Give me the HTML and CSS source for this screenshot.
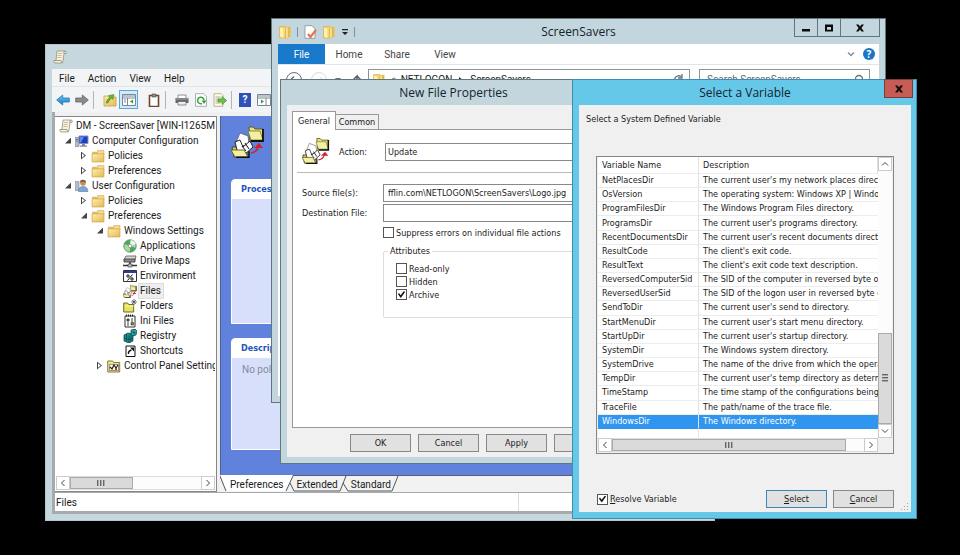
FILE: index.html
```
<!DOCTYPE html>
<html lang="en">
<head>
<meta charset="utf-8">
<title>Group Policy Management Editor</title>
<link rel="stylesheet" href="styles.css">
</head>
<body>
<svg class="defs" aria-hidden="true">
  <defs>
    <linearGradient id="gold" x1="0" y1="0" x2="1" y2="1"><stop offset="0" stop-color="#fdeeb4"/><stop offset="1" stop-color="#e5b950"/></linearGradient>
    <linearGradient id="sky" x1="0" y1="0" x2="0" y2="1"><stop offset="0" stop-color="#6cc8f5"/><stop offset="1" stop-color="#1777c4"/></linearGradient>
  </defs>
  <symbol id="folder" viewBox="0 0 13 13"><path d="M1 2.500h4l1 1.200h6V12H1z" fill="#e3b95b"/><path d="M6 1.500h6v4H6z" fill="#f6dc92" stroke="#d5a849" stroke-width=".6"/><path d="M1 4.500h11V12H1z" fill="url(#gold)" stroke="#d3a74a" stroke-width=".7"/></symbol>
  <symbol id="book" viewBox="0 0 12 13"><path d="M1 1.500h6l1 1v9.500H1z" fill="#f4d673" stroke="#d9aa3c" stroke-width=".6"/><path d="M6 3l5-1.500V11l-5 1.500z" fill="#e9ba42"/><path d="M1.500 2.500l3 1V12l-3-1z" fill="#fff1b5"/><path d="M7 3l1.500-.5v9L7 12z" fill="#fae7a0"/></symbol>
  <symbol id="scroll" viewBox="0 0 14 14"><path d="M4 1h8q2 0 1 2.500h-2L10 11q0 2-2 2H2q-1.500 0-1-2.500h2z" fill="#f6f2df" stroke="#97917c" stroke-width=".8"/><path d="M1.500 10.500H8q0 2 1.500 2.300M11 3.500q-1-2 1-2.400" fill="none" stroke="#8f8871" stroke-width=".8"/><path d="M5 3.500h4M4.700 5.500h4M4.400 7.500h4" stroke="#b9b18e" stroke-width=".8"/></symbol>
  <symbol id="computer" viewBox="0 0 14 13"><path d="M0 3h4v9H0z" fill="#b4bdcc" stroke="#7c8798" stroke-width=".7"/><path d="M1 5h2M1 6.500h2" stroke="#45536b" stroke-width=".6"/><path d="M4 1.500h9v7.500H4z" fill="#1e3fc4" stroke="#8793ad" stroke-width="1"/><path d="M5 2.500h4L6 8H5z" fill="#5b8cf0"/><path d="M7 9h3v2h2v1.200H5V11h2z" fill="#7e899c"/></symbol>
  <symbol id="user" viewBox="0 0 14 13"><path d="M0 2h4v9H0z" fill="#b4bdcc" stroke="#7c8798" stroke-width=".6"/><circle cx="8" cy="3.500" r="2.800" fill="#c68e5a"/><path d="M5 3q0-3 3-2.800T11 3q-3-1.500-6 0" fill="#7c5a35"/><path d="M3.500 12q0-5 4.500-5t5 5z" fill="#7fa6d6" stroke="#5579a9" stroke-width=".6"/></symbol>
  <symbol id="files" viewBox="0 0 34 34"><path d="M18 3h4l2 2h8v11H19z" fill="#e8e27c" stroke="#5d5b1e" stroke-width="1"/><path d="M17 7h12l3 9H20z" fill="#f4f0a2" stroke="#77742b" stroke-width=".8"/><path d="M32 5v12H20" fill="none" stroke="#111" stroke-width="1.800"/><path d="M1 23h5l2 2h8v8H3z" fill="#d8d25d" stroke="#4a481c"/><path d="M9 9l8 3 1 8-11 3-1-7z" fill="#fff" stroke="#555" stroke-width=".7"/><path d="M4 18l5-2 3 7 7-6 3 6-9 8-6-1z" fill="#fff" stroke="#111" stroke-width=".9"/><path d="M14 19l4 6M11 22l4 5" stroke="#111" stroke-width="1"/><path d="M0 26h13l4 7H4z" fill="#f4f0a2" stroke="#5d5b1e" stroke-width=".9"/><path d="M5 33.300h13v-6" fill="none" stroke="#111" stroke-width="1.500"/><path d="M20 29q6-1 7-6" fill="none" stroke="#d3222c" stroke-width="1.500"/><path d="M23 24l5-5 4 5h-3z" fill="#d3222c"/></symbol>
  <symbol id="disc" viewBox="0 0 14 14"><circle cx="7" cy="7" r="6.200" fill="#a8dba9" stroke="#55775a" stroke-width=".8"/><path d="M7 7L1 5q2-4 6-4.200zM7 7l6 2q-2 4-6 4.200z" fill="#4aa95b"/><path d="M7 7l1-6q4 1 5 4z" fill="#ecf6ef"/><circle cx="7" cy="7" r="1.800" fill="#fff" stroke="#6f8a73" stroke-width=".7"/></symbol>
  <symbol id="drive" viewBox="0 0 14 14"><path d="M3 2h10l-1 4H1z" fill="#d8d8d8" stroke="#555" stroke-width=".8"/><path d="M1 5h11v3H1z" fill="#8b8b8b" stroke="#333" stroke-width=".8"/><path d="M0 11.500h14M7 8v4" stroke="#333" stroke-width="1.500"/><path d="M5 10h4v3H5z" fill="#bcbcbc" stroke="#333" stroke-width=".6"/></symbol>
  <symbol id="env" viewBox="0 0 14 14"><path d="M.5 1.500h13v11H.5z" fill="#fff" stroke="#333"/><path d="M1 2h12v2H1z" fill="#263da5"/><circle cx="5" cy="7" r="1.200" fill="none" stroke="#111"/><circle cx="9" cy="10" r="1.200" fill="none" stroke="#111"/><path d="M9.500 5.500l-5 6" stroke="#111"/></symbol>
  <symbol id="newfolder" viewBox="0 0 14 14"><path d="M.7 4h4l1 1.500h5V13H.7z" fill="#e6e35c" stroke="#5f5f20" stroke-width=".9"/><path d="M2 7h8.500" stroke="#fbf9b4"/><path d="M11 0v6M8 3h6M9 1l4 4M13 1L9 5" stroke="#444" stroke-width=".7"/></symbol>
  <symbol id="ini" viewBox="0 0 14 14"><path d="M2 2h10v11H2z" fill="#fff" stroke="#333"/><path d="M3.500.5v2M5.500.5v2M7.500.5v2M9.500.5v2" stroke="#222"/><path d="M4 5h2v2H4zM8 5h2M8 7h2M4 9h2M4 11h2" fill="#486d2d" stroke="#444"/><path d="M8 8.500h2.500V11H8z" fill="#72912b" stroke="#333" stroke-width=".6"/></symbol>
  <symbol id="reg" viewBox="0 0 14 14"><path d="M1 6l4-2 5 1v7l-4 2-5-2z" fill="#168d91" stroke="#0b3638" stroke-width=".7"/><path d="M1 9l5 1.500L10 9M3.500 5v7M6 6.500V14M8 5v7" fill="none" stroke="#0b3638" stroke-width=".6"/><path d="M8 1l4-1 2 2-1 4-3 1-2-2z" fill="#29b6b5" stroke="#0b3638" stroke-width=".7"/><path d="M8 3l5 1M11 0v6" stroke="#0b3638" stroke-width=".6"/></symbol>
  <symbol id="shortcut" viewBox="0 0 14 14"><path d="M3 2h9v10.500H3z" fill="#fff" stroke="#111"/><path d="M5.500 10q-.5-3 3-4" fill="none" stroke="#111" stroke-width="1.400"/><path d="M7 3.500h4v4z" fill="#111"/></symbol>
  <symbol id="cpl" viewBox="0 0 14 14"><path d="M.7 2h5l1 1.500h6V13H.7z" fill="#efe58b" stroke="#77702a" stroke-width=".9"/><path d="M2.500 5.500h9v6h-9z" fill="#fff" stroke="#555" stroke-width=".6"/><path d="M3 8l2 2 2-4 2 3 2-3" fill="none" stroke="#222" stroke-width="1.200"/><path d="M8 9h2v2H8z" fill="#c33"/></symbol>
  <symbol id="left" viewBox="0 0 8 8"><path d="M5.500 1l-3 3 3 3" fill="none" stroke="#444"/></symbol>
  <symbol id="right" viewBox="0 0 8 8"><path d="M2.500 1l3 3-3 3" fill="none" stroke="#444"/></symbol>
  <symbol id="up" viewBox="0 0 8 8"><path d="M1 5.500l3-3 3 3" fill="none" stroke="#444"/></symbol>
  <symbol id="down" viewBox="0 0 8 8"><path d="M1 2.500l3 3 3-3" fill="none" stroke="#444"/></symbol>
</svg>

<main class="desktop">

<section class="window console" aria-label="Group Policy console">
  <header class="titlebar"><svg class="i14"><use href="#scroll"/></svg></header>
  <nav class="menubar"><button>File</button><button>Action</button><button>View</button><button>Help</button></nav>
  <div class="toolbar">
    <button aria-label="Back"><svg class="i14" viewBox="0 0 14 14"><path d="M.7 7l6-5v3h6.600v4H6.700v3z" fill="url(#sky)" stroke="#2b77b5" stroke-width=".8"/></svg></button>
    <button aria-label="Forward"><svg class="i14" viewBox="0 0 14 14"><path d="M13.300 7l-6-5v3H.7v4h6.600v3z" fill="#8b8b8b" stroke="#646464" stroke-width=".8"/></svg></button>
    <i class="sep"></i>
    <button aria-label="Up one level" class="lead"><svg class="i14" viewBox="0 0 14 14"><path d="M1 3h4l1 1h7v9H1z" fill="url(#gold)" stroke="#c99f44" stroke-width=".8"/><path d="M3 10q1-4 4-6L5.500 2.500 11 1.500 10 6.500 8.700 5.300Q6 7 5 10z" fill="#68b42e" stroke="#3c8519" stroke-width=".5"/></svg></button>
    <button aria-label="Show console tree" class="on"><svg class="i14" viewBox="0 0 14 14"><path d="M.5 1.500h13v11H.5z" fill="#fff" stroke="#7b8794"/><path d="M1 3h12M1 5h12" stroke="#7b8794"/><path d="M5.500 5v7" stroke="#7b8794"/><path d="M2 7h2M2 9h2" stroke="#6a8fc4"/><path d="M11 6.500v4L8 8.500z" fill="#3b9a38"/></svg></button>
    <button aria-label="Properties" class="lead"><svg class="i14" viewBox="0 0 14 14"><path d="M2.500 2.500h9v11h-9z" fill="#fff" stroke="#74462b" stroke-width="1.600"/><path d="M5 1h4v3H5z" fill="#87898c" stroke="#444" stroke-width=".6"/></svg></button>
    <i class="sep"></i>
    <button aria-label="Print" class="lead"><svg class="i14" viewBox="0 0 14 14"><path d="M3 2h8v4H3z" fill="#fff" stroke="#777" stroke-width=".8"/><path d="M.5 5h13v5H.5z" fill="#63666b"/><path d="M1 6h12" stroke="#a9adb2"/><path d="M3 8.500h8V12H3z" fill="#e8f0f4" stroke="#666" stroke-width=".7"/></svg></button>
    <button aria-label="Refresh"><svg class="i14" viewBox="0 0 14 14"><path d="M1.500.7h8l3 3v9.600h-11z" fill="#fff" stroke="#9a9a9a" stroke-width=".8"/><path d="M10 7.500a3.200 3.200 0 1 0-2 3" fill="none" stroke="#38a43a" stroke-width="1.500"/><path d="M7.500 7.500h5L10 11z" fill="#38a43a"/></svg></button>
    <button aria-label="Export list"><svg class="i14" viewBox="0 0 14 14"><path d="M1 .7h7l2 2v10.600H1z" fill="#fffbe0" stroke="#aaa489" stroke-width=".8"/><path d="M2.500 4h5M2.500 6h5M2.500 8h5M2.500 10h5" stroke="#999" stroke-width=".8"/><path d="M5 6h4V3.500l4.700 4L9 11.500V9H5z" fill="#66c34b" stroke="#328925" stroke-width=".6"/></svg></button>
    <i class="sep"></i>
    <button aria-label="Help" class="helpbtn">?</button>
    <button aria-label="Show action pane"><svg class="i14" viewBox="0 0 14 14"><path d="M.5 1.500h13v11H.5z" fill="#fff" stroke="#7b8794"/><path d="M1 3h12M1 5h12M9 5v7" stroke="#7b8794"/><path d="M4 6.500v4l3-2z" fill="#3b9a38"/></svg></button>
  </div>
  <div class="workspace">
    <aside class="treepane">
      <ul class="tree">
        <li class="root"><svg class="i14"><use href="#scroll"/></svg><span>DM - ScreenSaver [WIN-I1265M</span></li>
        <li class="l1 open"><svg class="i14"><use href="#computer"/></svg><span>Computer Configuration</span></li>
        <li class="l2 shut"><svg class="i14"><use href="#folder"/></svg><span>Policies</span></li>
        <li class="l2 shut"><svg class="i14"><use href="#folder"/></svg><span>Preferences</span></li>
        <li class="l1 open"><svg class="i14"><use href="#user"/></svg><span>User Configuration</span></li>
        <li class="l2 shut"><svg class="i14"><use href="#folder"/></svg><span>Policies</span></li>
        <li class="l2 open"><svg class="i14"><use href="#folder"/></svg><span>Preferences</span></li>
        <li class="l3 open"><svg class="i14"><use href="#folder"/></svg><span>Windows Settings</span></li>
        <li class="l4"><svg class="i14"><use href="#disc"/></svg><span>Applications</span></li>
        <li class="l4"><svg class="i14"><use href="#drive"/></svg><span>Drive Maps</span></li>
        <li class="l4"><svg class="i14"><use href="#env"/></svg><span>Environment</span></li>
        <li class="l4 picked"><svg class="i14"><use href="#files"/></svg><span>Files</span></li>
        <li class="l4"><svg class="i14"><use href="#newfolder"/></svg><span>Folders</span></li>
        <li class="l4"><svg class="i14"><use href="#ini"/></svg><span>Ini Files</span></li>
        <li class="l4"><svg class="i14"><use href="#reg"/></svg><span>Registry</span></li>
        <li class="l4"><svg class="i14"><use href="#shortcut"/></svg><span>Shortcuts</span></li>
        <li class="l3 shut"><svg class="i14"><use href="#cpl"/></svg><span>Control Panel Settings</span></li>
      </ul>
      <div class="hscroll">
        <button aria-label="Scroll left"><svg><use href="#left"/></svg></button>
        <div class="track"><div class="thumb short"><i></i><i></i><i></i></div></div>
        <button aria-label="Scroll right"><svg><use href="#right"/></svg></button>
      </div>
    </aside>
    <div class="details">
      <div class="canvas">
        <div class="banner"><svg><use href="#files"/></svg></div>
        <section class="card grow"><h2>Processing</h2><p></p></section>
        <section class="card"><h2>Description</h2><p>No policies selected</p></section>
      </div>
      <div class="viewtabs">
        <svg class="edges" viewBox="0 0 180 17" aria-hidden="true"><path d="M0 0h73l-7 16H6z" fill="#fff"/><path d="M0 1l6 15M66 16l7-15M70 8l4 8h46l6-15M123 8l5 8h44l6-15" fill="none" stroke="#555"/></svg>
        <button>Preferences</button><button>Extended</button><button>Standard</button>
      </div>
    </div>
  </div>
  <footer class="status"><span>Files</span><span></span></footer>
</section>

<section class="window explorer" aria-label="ScreenSavers">
  <header class="titlebar">
    <div class="quick">
      <svg class="i14"><use href="#book"/></svg><i class="tick"></i>
      <svg class="i14" viewBox="0 0 14 14"><path d="M2 .7h7l3 3v9.600H2z" fill="#fff" stroke="#858a90" stroke-width=".8"/><path d="M5 9l2.500 3 5.500-7" fill="none" stroke="#e4754c" stroke-width="2.200"/></svg>
      <svg class="i14"><use href="#book"/></svg>
      <svg class="i8" viewBox="0 0 8 8"><path d="M1 1h6v1.200H1zM1 4h6L4 7z" fill="#222"/></svg><i class="tick"></i>
    </div>
    <h1>ScreenSavers</h1>
    <div class="winbtns">
      <button aria-label="Minimize"><svg viewBox="0 0 10 10"><path d="M1 6h8v2.500H1z"/></svg></button>
      <button aria-label="Maximize"><svg viewBox="0 0 10 10"><path d="M1 1.500h8v7H1zM3 4v2.800h4V4z" fill-rule="evenodd"/></svg></button>
      <button aria-label="Close" class="wide"><svg viewBox="0 0 10 10"><path d="M1 1.500h2.500L5 3.600l1.500-2.100H9L6.400 5 9 8.500H6.500L5 6.400 3.500 8.500H1L3.600 5z"/></svg></button>
    </div>
  </header>
  <div class="ribbon">
    <button class="file">File</button><button>Home</button><button>Share</button><button>View</button>
    <div class="ribbonend"><svg class="i8" viewBox="0 0 8 8"><path d="M1 2.500l3 3 3-3" fill="none" stroke="#84909a" stroke-width="1.500"/></svg><button class="round" aria-label="Help">?</button></div>
  </div>
  <div class="navrow">
    <svg class="navicons" viewBox="0 0 82 18" aria-hidden="true"><circle cx="8" cy="9" r="7.500" fill="#fff" stroke="#667079"/><path d="M12 9H4.500L8 5.500M4.500 9L8 12.500" fill="none" stroke="#667079" stroke-width="1.500"/><circle cx="33" cy="9" r="7.500" fill="#fff" stroke="#d7dade"/><path d="M29 9h8l-3-3" fill="none" stroke="#d7dade"/><path d="M49 7h6l-3 4z" fill="#667079"/><path d="M71 15V5l-3.500 3.500M71 5l3.500 3.500" fill="none" stroke="#556069" stroke-width="1.500"/></svg>
    <div class="address"><svg class="i14"><use href="#book"/></svg><span>«</span><a href="#netlogon">NETLOGON</a><svg class="i8" viewBox="0 0 8 8"><path d="M2 1l4 3-4 3z" fill="#222"/></svg><a href="#savers">ScreenSavers</a><svg class="i14 reload" viewBox="0 0 14 14"><path d="M11 9a4 4 0 1 1-1-5.500M11 1v4H7" fill="none" stroke="#667079" stroke-width="1.300"/></svg></div>
    <div class="search"><input type="text" aria-label="Search" placeholder="Search ScreenSavers"><svg class="i14" viewBox="0 0 14 14"><circle cx="8" cy="6" r="3.500" fill="none" stroke="#667079" stroke-width="1.300"/><path d="M5.500 8.500L2 12" stroke="#667079" stroke-width="1.500"/></svg></div>
  </div>
</section>

<section class="window props" role="dialog" aria-label="New File Properties">
  <header class="titlebar"><h1>New File Properties</h1></header>
  <div class="body">
    <div class="tabs"><button class="active">General</button><button>Common</button></div>
    <div class="page">
      <div class="action"><svg><use href="#files"/></svg><label for="act">Action:</label><select id="act"><option>Update</option></select></div>
      <div class="fields">
        <label for="src">Source file(s):</label><input id="src" type="text" value="fflin.com\NETLOGON\ScreenSavers\Logo.jpg">
        <label for="dst">Destination File:</label><input id="dst" type="text">
        <div class="options">
          <label class="check"><input type="checkbox">Suppress errors on individual file actions</label>
          <fieldset><legend>Attributes</legend>
            <label class="check"><input type="checkbox">Read-only</label>
            <label class="check"><input type="checkbox">Hidden</label>
            <label class="check"><input type="checkbox" checked>Archive</label>
          </fieldset>
        </div>
      </div>
    </div>
    <div class="actions"><button>OK</button><button>Cancel</button><button>Apply</button><button>Help</button></div>
  </div>
</section>

<section class="window picker" role="dialog" aria-label="Select a Variable">
  <header class="titlebar"><h1>Select a Variable</h1>
    <button class="close" aria-label="Close"><svg viewBox="0 0 10 10"><path d="M1 1.500h2.500L5 3.600l1.500-2.100H9L6.400 5 9 8.500H6.500L5 6.400 3.500 8.500H1L3.600 5z"/></svg></button></header>
  <div class="body">
    <p>Select a System Defined Variable</p>
    <div class="listbox">
      <div class="rows">
        <table>
          <thead><tr><th>Variable Name</th><th>Description</th></tr></thead>
          <tbody>
            <tr><td>NetPlacesDir</td><td>The current user's my network places direct</td></tr>
            <tr><td>OsVersion</td><td>The operating system: Windows XP | Windo</td></tr>
            <tr><td>ProgramFilesDir</td><td>The Windows Program Files directory.</td></tr>
            <tr><td>ProgramsDir</td><td>The current user's programs directory.</td></tr>
            <tr><td>RecentDocumentsDir</td><td>The current user's recent documents directo</td></tr>
            <tr><td>ResultCode</td><td>The client's exit code.</td></tr>
            <tr><td>ResultText</td><td>The client's exit code text description.</td></tr>
            <tr><td>ReversedComputerSid</td><td>The SID of the computer in reversed byte o</td></tr>
            <tr><td>ReversedUserSid</td><td>The SID of the logon user in reversed byte o</td></tr>
            <tr><td>SendToDir</td><td>The current user's send to directory.</td></tr>
            <tr><td>StartMenuDir</td><td>The current user's start menu directory.</td></tr>
            <tr><td>StartUpDir</td><td>The current user's startup directory.</td></tr>
            <tr><td>SystemDir</td><td>The Windows system directory.</td></tr>
            <tr><td>SystemDrive</td><td>The name of the drive from which the opera</td></tr>
            <tr><td>TempDir</td><td>The current user's temp directory as determ</td></tr>
            <tr><td>TimeStamp</td><td>The time stamp of the configurations being e</td></tr>
            <tr><td>TraceFile</td><td>The path/name of the trace file.</td></tr>
            <tr class="selected"><td>WindowsDir</td><td>The Windows directory.</td></tr>
          </tbody>
        </table>
      </div>
      <div class="vscroll">
        <button aria-label="Scroll up"><svg><use href="#up"/></svg></button>
        <div class="track"><div class="thumb"><i></i><i></i><i></i></div></div>
        <button aria-label="Scroll down"><svg><use href="#down"/></svg></button>
      </div>
      <div class="hscroll">
        <button aria-label="Scroll left"><svg><use href="#left"/></svg></button>
        <div class="track"><div class="thumb long"><i></i><i></i><i></i></div></div>
        <button aria-label="Scroll right"><svg><use href="#right"/></svg></button>
      </div>
    </div>
    <div class="confirm">
      <label class="check"><input type="checkbox" checked><span><u>R</u>esolve Variable</span></label>
      <button class="default"><u>S</u>elect</button><button><u>C</u>ancel</button>
    </div>
    <svg class="grip" viewBox="0 0 8 8" aria-hidden="true"><path d="M6 0h1v1H6zM3 3h1v1H3zM6 3h1v1H6zM0 6h1v1H0zM3 6h1v1H3zM6 6h1v1H6z" fill="#a5a5a5"/></svg>
  </div>
</section>

</main>
</body>
</html>
```
FILE: styles.css
```
:root {
  --ui: Roboto, "Open Sans", sans-serif;
  --dialog: "DejaVu Sans Condensed", "DejaVu Sans", sans-serif;
  --title: "Open Sans", "Noto Sans", sans-serif;
  --frame: #c3d6de;
  --edge: #5f7880;
}
* { box-sizing: border-box; }
body { margin: 0; background: #000; color: #1b1b1b; font: 10px/15px var(--ui); }
button, input, select { margin: 0; padding: 0; border: 0; border-radius: 0; background: none; color: inherit; font: inherit; }
h1, h2, p, ul { margin: 0; padding: 0; font-weight: normal; }
a { color: inherit; text-decoration: none; }
svg { display: block; flex: none; }
.defs { position: absolute; width: 0; height: 0; }
.i14 { width: 14px; height: 14px; }
.i8 { width: 8px; height: 8px; }

.desktop { position: relative; height: 100vh; min-height: 540px; overflow: hidden; }
.window { position: absolute; display: flex; flex-direction: column; background: var(--frame); border: 1px solid var(--edge); }
.titlebar { display: flex; align-items: center; flex: none; height: 25px; }
.titlebar h1 { flex: 1; text-align: center; font: 12px/24px var(--title); color: #14232b; }

/* Console */
.console { inset: 44px 245px 34px 45px; padding: 0 6px 6px; background: #c7d7de; border-color: #b5c5cc; }
.console .titlebar { height: 24px; padding-left: 1px; }
.menubar { display: flex; height: 17px; background: #f3f4f5; padding: 1px 7px 0; gap: 13px; flex: none; }
.toolbar { display: flex; align-items: center; height: 26px; padding-left: 1px; background: #f3f4f5; border-top: 1px solid #e2e4e6; flex: none; }
.toolbar button { display: grid; place-items: center; width: 19px; height: 19px; flex: none; }
.toolbar .sep { width: 1px; height: 18px; margin: 0 2px; background: #b0b4b8; }
.toolbar .lead { margin-left: 4px; }
.toolbar .on { border: 1px solid #58a9dc; background: #d3e9f7; margin-right: 2px; }
.toolbar .helpbtn { width: 12px; height: 14px; margin: 0 3px 0 5px; background: #2f52b8; color: #fff; font-weight: bold; line-height: 14px; }
.workspace { display: flex; flex: 1; min-height: 0; padding-top: 4px; background: #f0f0f0; border-left: 3px solid #a5abae; }
.treepane { display: flex; flex-direction: column; width: 162px; margin-right: 3px; flex: none; background: #fff; border: 1px solid #82888d; border-left: 0; padding: 1px; }
.tree { flex: 1; min-height: 0; list-style: none; overflow: hidden; }
.tree li { display: flex; align-items: center; gap: 3px; height: 15px; white-space: nowrap; }
.tree .root { padding-left: 3px; }
.l1 { padding-left: 6px; }
.l2 { padding-left: 22px; }
.l3 { padding-left: 38px; }
.l4 { padding-left: 67px; }
.open::before, .shut::before { content: ""; width: 10px; height: 6px; flex: none; background: #444; clip-path: polygon(30% 100%, 90% 0, 90% 100%); }
.shut::before { height: 8px; clip-path: polygon(evenodd, 30% 0, 80% 50%, 30% 100%, 30% 0, 40% 22%, 40% 78%, 66% 50%, 40% 22%); }
.picked span { background: #eee; box-shadow: 0 0 0 1px #ddd; padding: 0 2px 0 1px; margin-left: -1px; line-height: 14px; }
.details { display: flex; flex-direction: column; flex: 1; min-width: 0; }
.canvas { display: flex; flex-direction: column; flex: 1; min-height: 0; padding: 8px 10px 25px; background: #6182dc; border-left: 1px solid #4f5f90; }
.banner { height: 55px; flex: none; }
.banner svg { width: 34px; height: 34px; }
.card { display: flex; flex-direction: column; flex: 1; min-height: 0; border: 1px solid #fff; border-radius: 4px 4px 0 0; background: #d8dffa; }
.card.grow { flex: 0 0 145px; margin-bottom: 14px; }
.card h2 { background: #fff; border-radius: 4px 4px 0 0; padding: 1px 9px; color: #2454bd; font: bold 9px/17px var(--dialog); }
.card p { padding: 4px 10px; color: #858ba0; }
.viewtabs { position: relative; display: flex; height: 17px; background: #f2f2f2; border-top: 1px solid #59606c; flex: none; }
.viewtabs .edges { position: absolute; left: 0; top: -1px; width: 180px; height: 17px; }
.viewtabs button { position: relative; padding: 0 0 0 10px; margin-right: 3px; }
.status { display: flex; height: 22px; flex: none; background: #fff; border: solid #a5abae; border-width: 1px 0 3px 3px; line-height: 19px; }
.status span { flex: 1; padding-left: 1px; }
.status span:first-child { flex: 0 0 71%; border-right: 1px solid #ddd; }

/* Scrollbars */
.hscroll, .vscroll { display: flex; background: #f1f1f1; flex: none; }
.hscroll { height: 14px; }
.vscroll { flex-direction: column; }
.hscroll button, .vscroll button { display: grid; place-items: center; width: 14px; height: 14px; flex: none; background: #fff; border: 1px solid #ccc; }
.hscroll svg, .vscroll svg { width: 8px; height: 8px; }
.track { display: flex; flex: 1; background: #fcfcfc; min-height: 0; }
.hscroll .track { border: solid #ddd; border-width: 1px 0; }
.thumb { display: flex; align-items: center; justify-content: center; gap: 1px; background: #dadada; border: 1px solid #aaa; }
.thumb i { width: 2px; height: 6px; background: #666; border-right: 1px solid #aaa; }
.thumb.short { width: 48%; }
.thumb.long { width: 93%; }
.vscroll .track, .vscroll .thumb { flex-direction: column; }
.vscroll .track { justify-content: flex-end; }
.vscroll .thumb { height: 36%; }
.vscroll .thumb i { width: 6px; height: 2px; border-right: 0; border-bottom: 1px solid #aaa; }

/* Explorer */
.explorer { inset: 18px 74px 152px 271px; padding: 0 6px 6px; }
.explorer .titlebar { position: relative; }
.quick { position: absolute; left: 0; display: flex; align-items: center; gap: 5px; }
.tick { width: 1px; height: 10px; background: #7f939b; }
.winbtns { position: absolute; right: -1px; top: -1px; display: flex; border: 1px solid var(--edge); }
.winbtns button { display: grid; place-items: center; width: 23px; height: 17px; border-right: 1px solid var(--edge); }
.winbtns .wide { width: 38px; border-right: 0; }
.winbtns svg, .close svg { width: 10px; height: 10px; fill: #0b0b0b; }
.ribbon { display: flex; height: 21px; flex: none; background: #fff; border-bottom: 1px solid #dfe5e8; }
.ribbon > button { width: 48px; color: #444; }
.ribbon .file { width: 47px; background: #1979ca; color: #fff; }
.ribbonend { display: flex; align-items: center; gap: 8px; margin-left: auto; padding-right: 4px; }
.round { width: 12px; height: 12px; border-radius: 50%; background: #1a75c4; color: #fff; font: bold 10px/12px var(--title); }
.navrow { display: flex; flex: 1; align-items: flex-start; min-height: 0; padding: 4px 9px 0 8px; background: #fff; }
.navicons { width: 82px; height: 18px; margin: 2px 0 0; }
.address, .search { display: flex; align-items: center; height: 21px; border: 1px solid #8c949a; color: #222; }
.address { flex: 1; gap: 5px; padding: 0 4px 0 3px; margin-right: 9px; }
.address .reload { margin-left: auto; }
.search { width: 171px; padding: 0 4px 0 7px; }
.search input { flex: 1; min-width: 0; outline: 0; }
.search input::placeholder { color: #666; opacity: 1; }

/* Dialogs */
.props, .picker { padding: 0 6px 6px; font: 9px/14px var(--dialog); }
.props { inset: 79px 333px 91px 280px; }
.body { position: relative; display: flex; flex-direction: column; flex: 1; min-height: 0; background: #f0f0f0; }
.props .body { padding: 6px 5px 5px; }
.tabs { display: flex; align-items: flex-end; height: 18px; flex: none; }
.tabs button { height: 15px; border: 1px solid #999; border-left: 0; border-bottom: 0; width: 43px; background: #f0f0f0; }
.tabs .active { position: relative; height: 19px; width: 44px; margin-bottom: -1px; border-left: 1px solid #999; background: #fff; line-height: 16px; }
.page { flex: 1; min-height: 0; margin-bottom: 6px; background: #fff; border: 1px solid #999; padding: 0 4px; }
.action { display: flex; align-items: center; height: 43px; padding: 2px 5px 0; border-bottom: 1px solid #bbb; }
.action svg { width: 28px; height: 28px; margin: 0 9px 4px 0; }
.action label { width: 46px; }
.action select { appearance: none; flex: 1; height: 18px; padding: 0 2px; border: 1px solid #888; }
.fields { display: grid; grid-template-columns: 81px 1fr; row-gap: 2px; align-items: center; padding: 11px 5px 0; }
.fields > input { height: 18px; min-width: 0; padding: 0 4px; border: 1px solid #888; }
.options { grid-column: 2; padding-top: 2px; }
.check { display: flex; align-items: center; gap: 2px; height: 13px; white-space: nowrap; }
.check input { appearance: none; display: grid; place-items: center; flex: none; width: 11px; height: 11px; border: 1px solid #555; background: #fff; }
.check input:checked::before { content: ""; width: 7px; height: 7px; background: #111; clip-path: polygon(0 45%, 14% 30%, 38% 60%, 85% 0, 100% 16%, 40% 100%); }
fieldset { margin: 5px 0 0; padding: 4px 12px 16px; border: 1px solid #ddd; border-radius: 2px; }
legend { padding: 0 2px; margin-left: -8px; }
.actions { display: flex; gap: 7px; justify-content: flex-end; flex: none; }
.actions button, .confirm button { width: 61px; height: 18px; border: 1px solid #888; background: #e1e1e1; flex: none; }
.picker { inset: 79px 43px 36px 572px; background: #66c8e8; border-color: #3c8fae; padding: 0 5px 6px 6px; }
.picker .titlebar { position: relative; }
.close { position: absolute; right: -2px; top: -1px; display: grid; place-items: center; width: 29px; height: 19px; background: #c75b55; border: 1px solid #7c3b3b; }
.picker .body { padding: 7px 17px 4px 7px; }
.picker .body p { flex: none; padding-bottom: 30px; }
.listbox { display: grid; grid-template: minmax(0, 1fr) 14px / minmax(0, 1fr) 14px; flex: 1; min-height: 0; margin-left: 10px; padding: 0 1px 1px; border: 1px solid #82878c; background: #f0f0f0; }
.rows { overflow: hidden; background: linear-gradient(90deg, #fff 100px, #e6e6e6 100px, #e6e6e6 101px, #fff 101px); }
.listbox table { width: 100%; height: 272px; table-layout: fixed; border-collapse: separate; border-spacing: 0; }
.listbox th, .listbox td { overflow: hidden; padding: 0 0 0 4px; text-align: left; font-weight: normal; white-space: nowrap; line-height: 13px; border-bottom: 1px solid #ececec; }
.listbox th { height: 17px; background: #fff; border-right: 1px solid #ddd; }
.listbox th:first-child { width: 101px; }
.listbox tr > :first-child { border-right: 1px solid #e2e2e2; }
.selected td { background: #3095ee; color: #fff; border-color: #3095ee; }
.confirm { display: flex; align-items: center; gap: 6px; flex: none; margin: 36px 0 0 11px; }
.confirm .check { flex: 1; }
.confirm .default { border-color: #3c87b8; }
.grip { position: absolute; right: 2px; bottom: 1px; width: 8px; height: 8px; }
```
